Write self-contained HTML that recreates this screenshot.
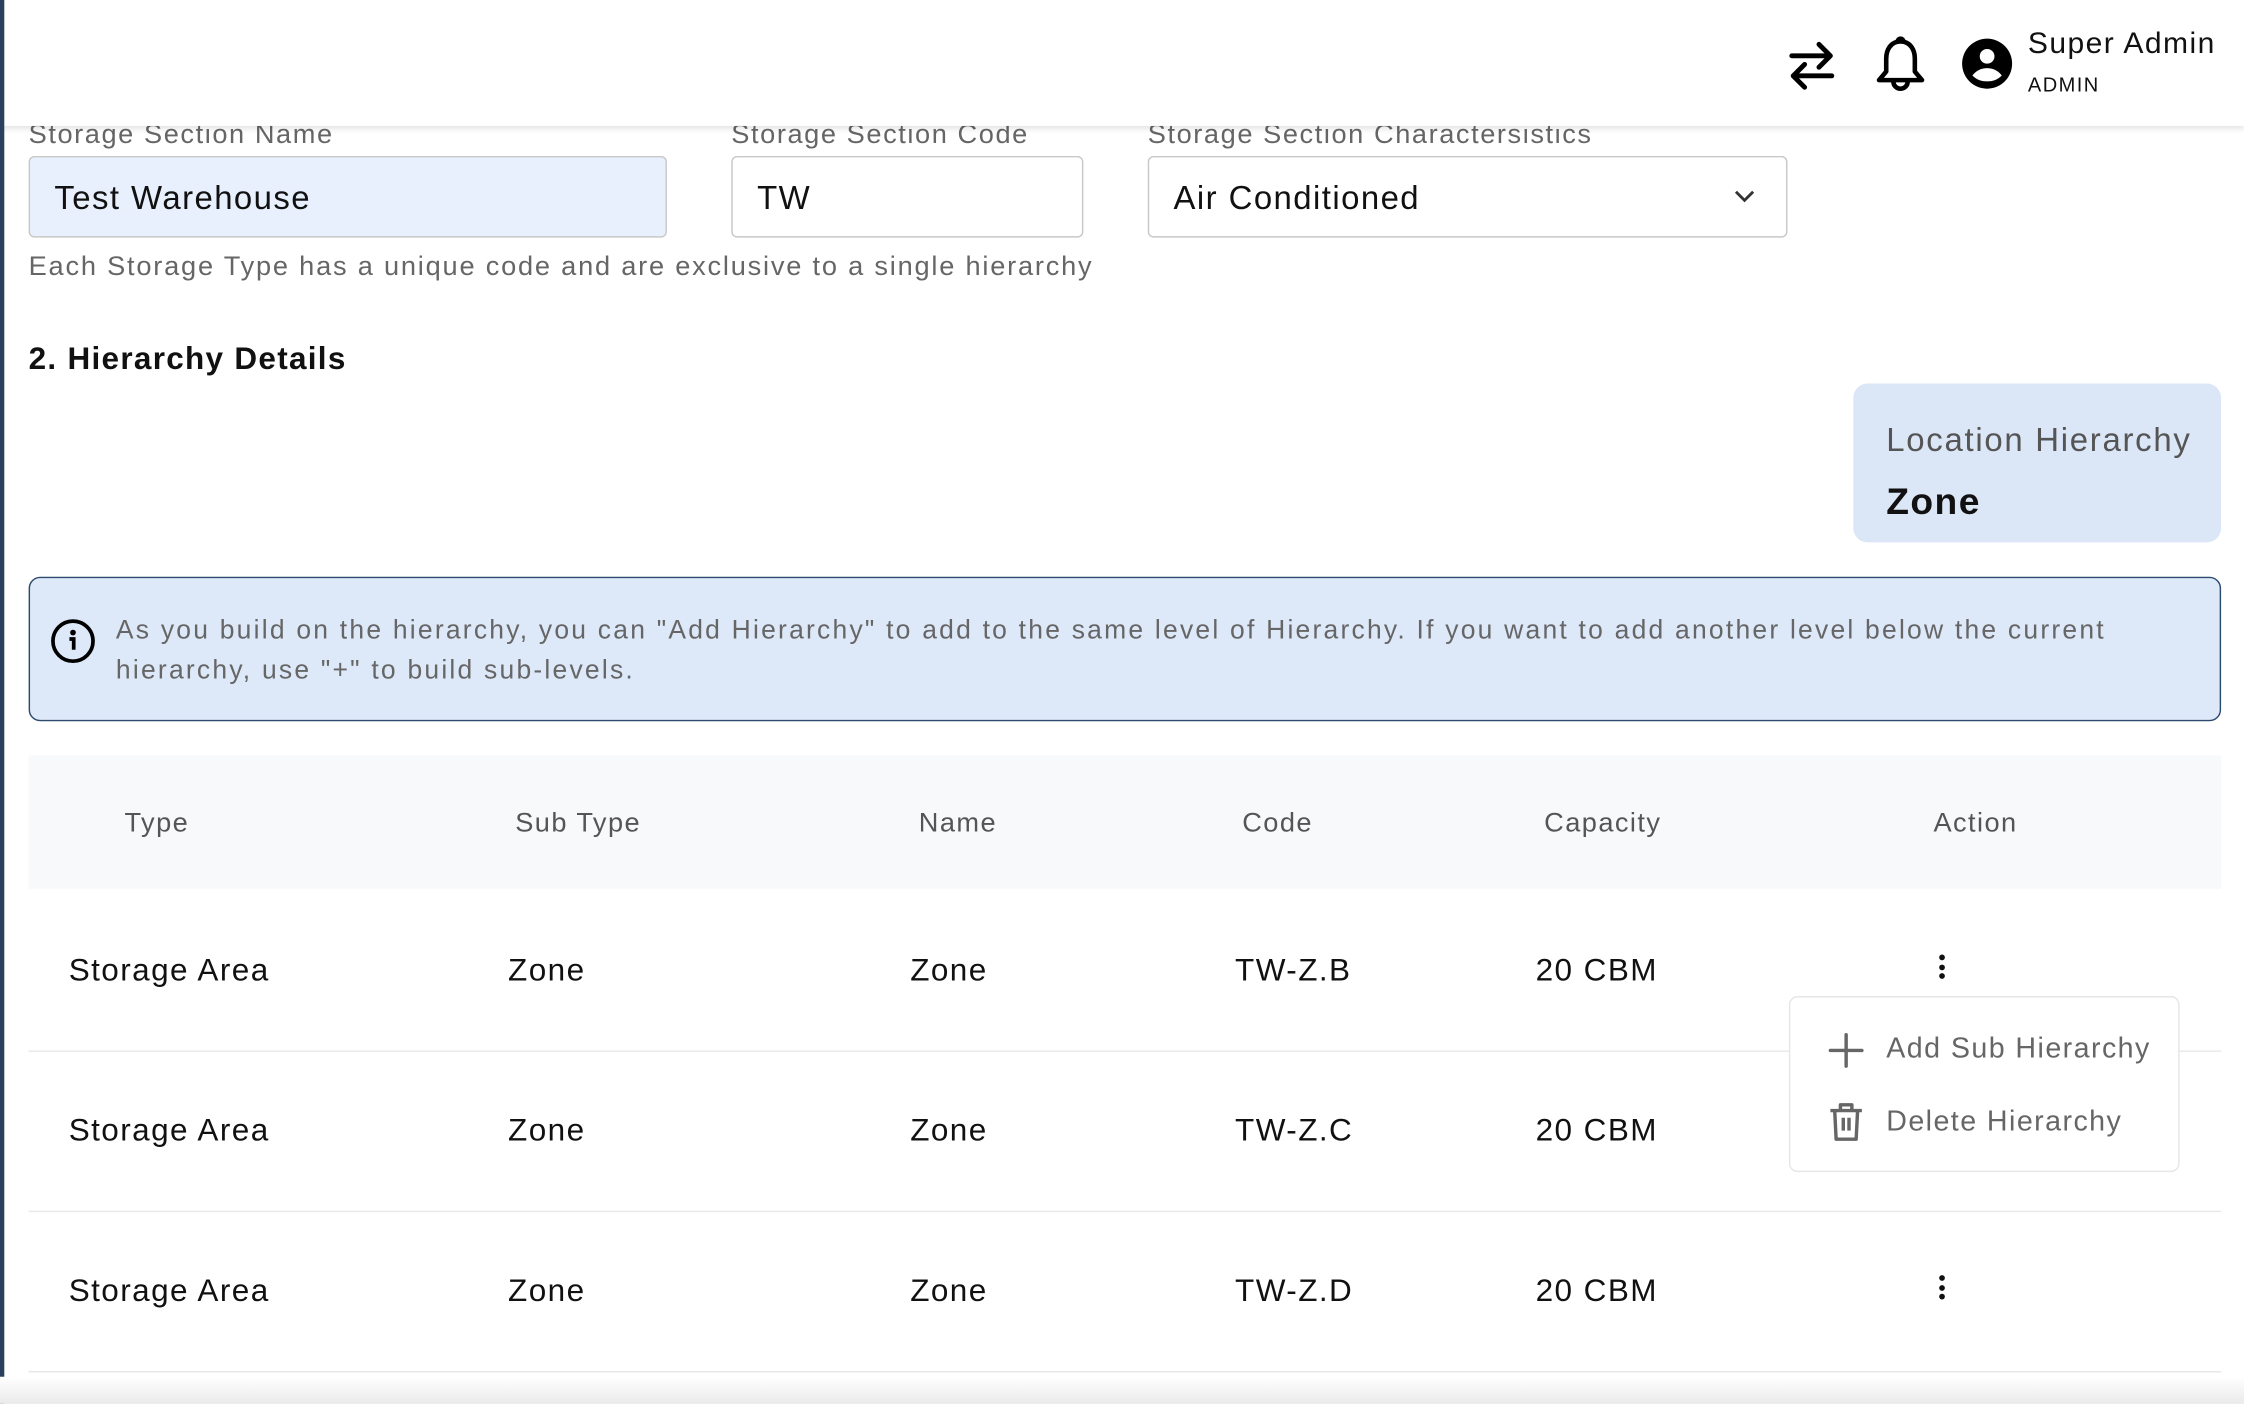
<!DOCTYPE html>
<html><head><meta charset="utf-8"><style>
html,body{margin:0;padding:0;width:2244px;height:1404px;overflow:hidden;background:#fff}
#w{position:absolute;left:0;top:0;width:1568px;height:981px;transform:scale(1.43112);transform-origin:0 0;font-family:"Liberation Sans",sans-serif;background:#fff;overflow:hidden;letter-spacing:1px}
.a{position:absolute;white-space:nowrap}
.lbl{font-size:19px;color:#666;top:84px;letter-spacing:1.1px}
.inp{position:absolute;top:109px;height:57px;border:1px solid #c8c8c8;border-radius:4px;box-sizing:border-box;font-size:23px;color:#111;line-height:56px;padding-left:17px}
.th{font-size:19px;color:#555;top:565px}
.td{font-size:22px;color:#111}
.sep{position:absolute;left:20px;width:1532px;height:1px;background:#e8e8e8}
.keb{position:absolute;width:4px}
.keb i{display:block;width:4px;height:4px;border-radius:2px;background:#111;margin-bottom:2.5px}
</style></head><body><div id="w">
<div class="a lbl" style="left:20px">Storage Section Name</div>
<div class="a lbl" style="left:511px">Storage Section Code</div>
<div class="a lbl" style="left:802px">Storage Section Charactersistics</div>
<div style="position:absolute;left:0;top:0;width:1568px;height:88px;background:#fff;box-shadow:0 2px 4px rgba(0,0,0,.12)"></div>
<svg class="a" style="left:1246px;top:26px" width="40" height="40" viewBox="0 0 40 40" fill="none" stroke="#000" stroke-width="3.4" stroke-linecap="round" stroke-linejoin="round"><path d="M6 13H33M25 5L33 13L25 21M34 27H7M15 19L7 27L15 35"/></svg>
<svg class="a" style="left:1309px;top:24px" width="38" height="42" viewBox="0 0 38 42" fill="none" stroke="#000" stroke-width="3.2" stroke-linejoin="round"><path d="M19 5C12 5 9 11 9 17V26L4 32H34L29 26V17C29 11 26 5 19 5Z"/><path d="M17 5a2 2 0 0 1 4 0"/><path d="M14 33a5 5 0 0 0 10 0"/></svg>
<svg class="a" style="left:1370px;top:26px" width="37" height="37" viewBox="0 0 36 36"><circle cx="18" cy="18" r="17" fill="#000"/><circle cx="18" cy="13" r="5" fill="#fff"/><path d="M8 26c3-4 7-5 10-5s7 1 10 5c-3 3-6 4-10 4s-7-1-10-4z" fill="#fff"/></svg>
<div class="a" style="left:1417px;top:19px;font-size:21px;color:#111">Super Admin</div>
<div class="a" style="left:1417px;top:51px;font-size:14px;color:#111">ADMIN</div>
<div style="position:absolute;left:0;top:0;width:3px;height:981px;background:#2b3f5e"></div>
<div class="inp" style="left:20px;width:446px;background:#e8f0fe">Test Warehouse</div>
<div class="inp" style="left:511px;width:246px">TW</div>
<div class="inp" style="left:802px;width:447px">Air Conditioned</div>
<svg class="a" style="left:1210px;top:130px" width="18" height="14" viewBox="0 0 18 14" fill="none" stroke="#333" stroke-width="2"><path d="M3 4L9 10L15 4"/></svg>
<div class="a" style="left:20px;top:176px;font-size:19px;color:#666;letter-spacing:1.25px">Each Storage Type has a unique code and are exclusive to a single hierarchy</div>
<div class="a" style="left:20px;top:238px;font-size:22px;font-weight:bold;color:#111;letter-spacing:0.9px">2. Hierarchy Details</div>
<div style="position:absolute;left:1295px;top:268px;width:257px;height:111px;background:#dbe6f7;border-radius:10px"></div>
<div class="a" style="left:1318px;top:294px;font-size:23px;color:#555;letter-spacing:1.2px">Location Hierarchy</div>
<div class="a" style="left:1318px;top:335px;font-size:26px;font-weight:bold;color:#111">Zone</div>
<div style="position:absolute;left:20px;top:403px;width:1532px;height:101px;box-sizing:border-box;background:#dde8f8;border:1.5px solid #2b4a6e;border-radius:8px"></div>
<svg class="a" style="left:35px;top:432px" width="32" height="32" viewBox="0 0 32 32"><circle cx="16" cy="16" r="14" fill="none" stroke="#000" stroke-width="2.6"/><circle cx="16" cy="10" r="2" fill="#000"/><path d="M13.5 14.5h3v7.5" stroke="#000" stroke-width="2.6" fill="none"/></svg>
<div class="a" style="left:81px;top:426px;font-size:18.5px;color:#666;line-height:28px;letter-spacing:1.55px">As you build on the hierarchy, you can "Add Hierarchy" to add to the same level of Hierarchy. If you want to add another level below the current<br>hierarchy, use "+" to build sub-levels.</div>
<div style="position:absolute;left:20px;top:528px;width:1532px;height:93px;background:#f8f9fb"></div>
<div class="a th" style="left:87px">Type</div>
<div class="a th" style="left:360px">Sub Type</div>
<div class="a th" style="left:642px">Name</div>
<div class="a th" style="left:868px">Code</div>
<div class="a th" style="left:1079px">Capacity</div>
<div class="a th" style="left:1351px">Action</div>
<div class="sep" style="top:734px"></div><div class="sep" style="top:846px"></div><div class="sep" style="top:958px"></div>

<div class="a td" style="left:48px;top:665px">Storage Area</div><div class="a td" style="left:355px;top:665px">Zone</div><div class="a td" style="left:636px;top:665px">Zone</div><div class="a td" style="left:863px;top:665px">TW-Z.B</div><div class="a td" style="left:1073px;top:665px">20 CBM</div>
<div class="a td" style="left:48px;top:777px">Storage Area</div><div class="a td" style="left:355px;top:777px">Zone</div><div class="a td" style="left:636px;top:777px">Zone</div><div class="a td" style="left:863px;top:777px">TW-Z.C</div><div class="a td" style="left:1073px;top:777px">20 CBM</div>
<div class="a td" style="left:48px;top:889px">Storage Area</div><div class="a td" style="left:355px;top:889px">Zone</div><div class="a td" style="left:636px;top:889px">Zone</div><div class="a td" style="left:863px;top:889px">TW-Z.D</div><div class="a td" style="left:1073px;top:889px">20 CBM</div>
<div class="keb" style="left:1355px;top:667px"><i></i><i></i><i></i></div>
<div class="keb" style="left:1355px;top:891px"><i></i><i></i><i></i></div>

<div style="position:absolute;left:1250px;top:696px;width:273px;height:123px;box-sizing:border-box;background:#fff;border:1px solid #e6e6e6;border-radius:6px"></div>
<svg class="a" style="left:1276px;top:720px" width="28" height="28" viewBox="0 0 28 28" stroke="#666" stroke-width="2.4" stroke-linecap="round"><path d="M14 3V25M3 14H25"/></svg>
<div class="a" style="left:1318px;top:722px;font-size:20px;color:#666">Add Sub Hierarchy</div>
<svg class="a" style="left:1277px;top:769px" width="26" height="30" viewBox="0 0 26 30" fill="none" stroke="#666" stroke-width="2.4" stroke-linejoin="round"><path d="M2 7H24M9 7V3H17V7M5 7L6 27H20L21 7M11 12V21M15 12V21"/></svg>
<div class="a" style="left:1318px;top:773px;font-size:20px;color:#666">Delete Hierarchy</div>
<div style="position:absolute;left:0;top:962px;width:1568px;height:19px;background:linear-gradient(#fff,#eaeaea)"></div>
</div></body></html>
